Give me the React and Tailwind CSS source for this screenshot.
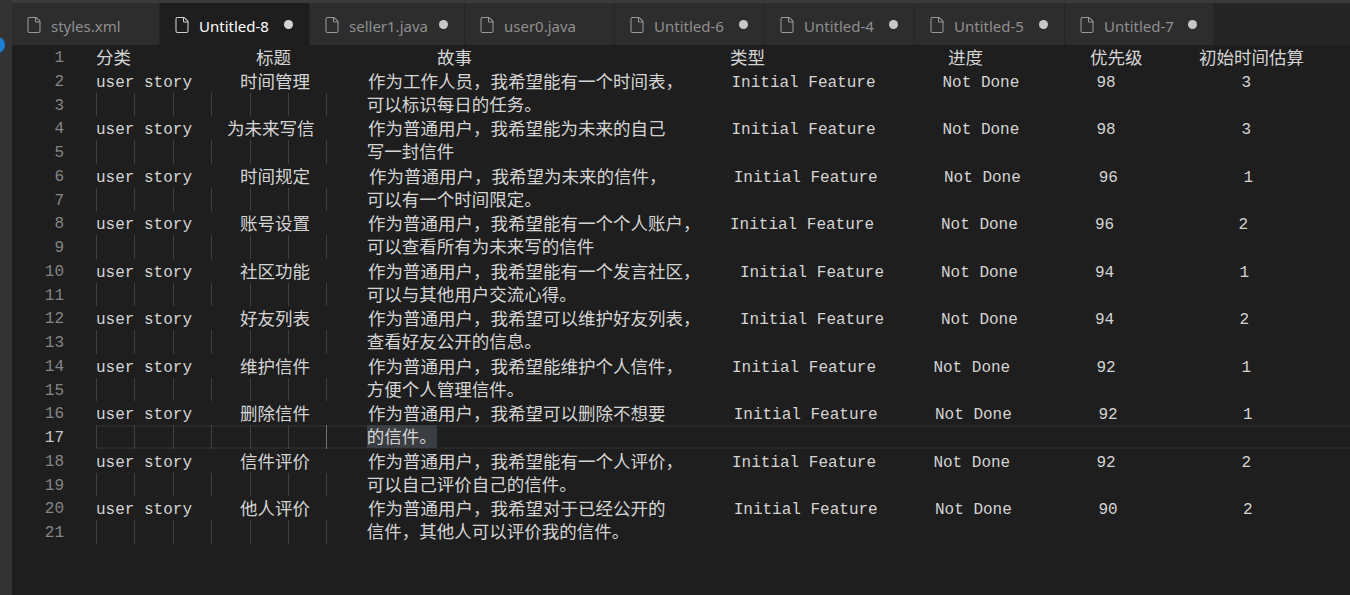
import React from "react";
import { File } from "lucide-react";

const tabs = [
  { name: "styles.xml", w: 148, dot: false },
  { name: "Untitled-8", w: 150, dot: true, active: true },
  { name: "seller1.java", w: 155, dot: true },
  { name: "user0.java", w: 150, dot: false },
  { name: "Untitled-6", w: 150, dot: true },
  { name: "Untitled-4", w: 150, dot: true },
  { name: "Untitled-5", w: 150, dot: true },
  { name: "Untitled-7", w: 149, dot: true },
];

const row = (title, tx, story, sx, ifx, ndx, pri, px, est, ex) => ({
  segs: [
    [96, "user story"],
    [tx, title],
    [sx, story],
    [ifx, "Initial Feature"],
    [ndx, "Not Done"],
    [px, pri],
    [ex, est],
  ],
});

const cont = (text) => ({ cont: text });

const lines = [
  {
    segs: [
      [96, "分类"],
      [256, "标题"],
      [437, "故事"],
      [730, "类型"],
      [948, "进度"],
      [1090, "优先级"],
      [1199, "初始时间估算"],
    ],
  },
  row("时间管理", 240, "作为工作人员，我希望能有一个时间表，", 368, 731.5, 942.5, "98", 1096.5, "3", 1241.5),
  cont("可以标识每日的任务。"),
  row("为未来写信", 227, "作为普通用户，我希望能为未来的自己", 368, 731.5, 942.5, "98", 1096.5, "3", 1241.5),
  cont("写一封信件"),
  row("时间规定", 240, "作为普通用户，我希望为未来的信件，", 369, 733.7, 944, "96", 1098.7, "1", 1243.5),
  cont("可以有一个时间限定。"),
  row("账号设置", 240, "作为普通用户，我希望能有一个个人账户，", 368, 730, 941, "96", 1095, "2", 1238.5),
  cont("可以查看所有为未来写的信件"),
  row("社区功能", 240, "作为普通用户，我希望能有一个发言社区，", 368, 740, 941, "94", 1095, "1", 1239.6),
  cont("可以与其他用户交流心得。"),
  row("好友列表", 240, "作为普通用户，我希望可以维护好友列表，", 368, 740, 941, "94", 1095, "2", 1239.6),
  cont("查看好友公开的信息。"),
  row("维护信件", 240, "作为普通用户，我希望能维护个人信件，", 368, 732, 933.4, "92", 1096.5, "1", 1241.5),
  cont("方便个人管理信件。"),
  row("删除信件", 240, "作为普通用户，我希望可以删除不想要", 368, 733.7, 935, "92", 1098.5, "1", 1243),
  cont("的信件。"),
  row("信件评价", 240, "作为普通用户，我希望能有一个人评价，", 368, 732, 933.4, "92", 1096.5, "2", 1241.5),
  cont("可以自己评价自己的信件。"),
  row("他人评价", 240, "作为普通用户，我希望对于已经公开的", 368, 733.7, 935, "90", 1098.5, "2", 1243),
  cont("信件，其他人可以评价我的信件。"),
];

const CJK = /[\u4e00-\u9fff\uff0c\u3002]/;

function Seg({ text }) {
  if (CJK.test(text)) {
    return (
      <span className="whitespace-nowrap text-[17.5px] font-['Noto_Sans_CJK_SC',sans-serif] text-[#d4d4d4]">
        {text}
      </span>
    );
  }
  return (
    <span className="whitespace-pre pt-[4px] text-[16px] font-['Liberation_Mono',monospace] text-[#d4d4d4]">
      {text}
    </span>
  );
}

function Tab({ tab }) {
  const active = tab.active;
  return (
    <div
      className={`flex h-full shrink-0 items-center border-r border-[#252526] ${
        active ? "bg-[#1e1e1e]" : "bg-[#2d2d2d]"
      }`}
      style={{ width: tab.w }}
    >
      <File
        size={18}
        strokeWidth={1.4}
        className={`ml-[13px] mt-[2px] shrink-0 ${active ? "text-[#d0d0d0]" : "text-[#9a9a9a]"}`}
      />
      <span
        className={`ml-[8px] pt-[4px] whitespace-nowrap text-[15px] font-['Noto_Sans',sans-serif] ${
          active ? "text-white" : "text-[#8f8f8f]"
        }`}
      >
        {tab.name}
      </span>
      {tab.dot && (
        <span
          className={`ml-auto mr-[16px] mt-[1px] h-[9px] w-[9px] shrink-0 rounded-full ${
            active ? "bg-[#d4d4d4]" : "bg-[#c8c8c8]"
          }`}
        />
      )}
    </div>
  );
}

function Line({ line, n }) {
  const current = n === 17;
  return (
    <div className="flex h-[23.75px] items-center">
      <div
        className={`w-[52px] shrink-0 pt-[4px] text-right text-[16px] leading-[23.75px] font-['Liberation_Mono',monospace] ${
          current ? "text-[#c6c6c6]" : "text-[#858585]"
        }`}
      >
        {n}
      </div>
      <div className="w-[32px] shrink-0" />
      <div
        className={`flex h-full flex-1 items-center ${
          current ? "border-y-2 border-[#282828]" : ""
        }`}
      >
        {line.cont !== undefined ? (
          <>
            {[0, 1, 2, 3, 4, 5, 6].map((i) => (
              <div
                key={i}
                className={`h-[23.75px] w-[38.4px] shrink-0 border-l ${
                  current && i === 6 ? "border-[#707070]" : "border-[#404040]"
                }`}
              />
            ))}
            <span
              className={`ml-[2px] leading-[22px] ${current ? "bg-[#3a3d41]" : ""}`}
            >
              <Seg text={line.cont} />
            </span>
          </>
        ) : (
          line.segs.map(([x, t], i) => {
            const next = line.segs[i + 1];
            const start = i === 0 ? 96 : x;
            const pre = i === 0 ? x - 96 : 0;
            return (
              <div
                key={i}
                className="flex shrink-0 items-center"
                style={{
                  marginLeft: pre,
                  width: next ? next[0] - start : undefined,
                }}
              >
                <Seg text={t} />
              </div>
            );
          })
        )}
      </div>
    </div>
  );
}

export default function App() {
  return (
    <div className="flex h-[595px] w-[1350px] overflow-hidden bg-[#1e1e1e]">
      <div className="relative w-[12px] shrink-0 bg-[#333333]">
        <div className="absolute left-[-11px] top-[37px] h-[16px] w-[16px] rounded-full bg-[#1b81d4]" />
      </div>
      <div className="flex min-w-0 flex-1 flex-col">
        <div className="h-[3px] shrink-0 bg-[#3a3a3a]" />
        <div className="flex h-[42px] shrink-0 bg-[#252526]">
          {tabs.map((t) => (
            <Tab key={t.name} tab={t} />
          ))}
        </div>
        <div className="flex flex-1 flex-col">
          {lines.map((l, i) => (
            <Line key={i} line={l} n={i + 1} />
          ))}
        </div>
      </div>
    </div>
  );
}
